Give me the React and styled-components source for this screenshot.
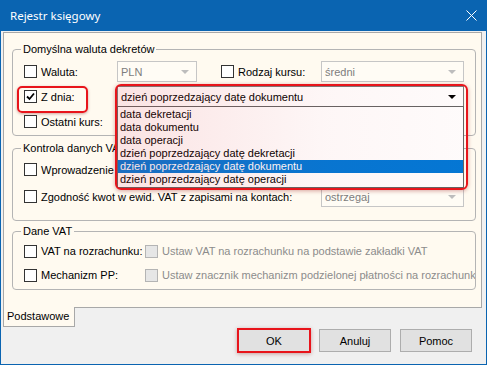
import React from 'react';
import styled, { createGlobalStyle, css } from 'styled-components';

const GlobalStyle = createGlobalStyle`
  html, body { margin: 0; padding: 0; }
  body {
    width: 487px;
    height: 365px;
    overflow: hidden;
    font-family: "Liberation Sans", Arial, sans-serif;
    font-size: 11px;
    color: #000;
    background: #fff;
  }
  * { box-sizing: border-box; }
`;

const Window = styled.div`
  width: 487px;
  height: 365px;
  display: flex;
  flex-direction: column;
`;

const TitleBar = styled.div`
  height: 31px;
  flex: none;
  background: #0a64b1;
  color: #fff;
  font-family: "Noto Sans", "Liberation Sans", sans-serif;
  font-size: 11.5px;
  display: flex;
  align-items: center;
  justify-content: space-between;
  padding: 0 10px 1px 10px;
`;

const Body = styled.div`
  flex: 1;
  display: flex;
  flex-direction: column;
  background: #f0f0f0;
  border: 1px solid #0a64b1;
  border-top: none;
  padding: 1px 4px 0 2px;
`;

const Panel = styled.div`
  height: 276px;
  background: #fffaf0;
  border: 1px solid #a8a8a8;
  padding: 9px 5px 0 8px;
  display: flex;
  flex-direction: column;
`;

const Group = styled.fieldset`
  margin: 0 0 ${(p) => p.$gap || 0}px 0;
  border: 1px solid #b4b4b4;
  border-radius: 4px;
  padding: ${(p) => p.$pad || '5px 0 3px 11px'};
  display: flex;
  flex-direction: column;
  gap: ${(p) => p.$rowGap || 5}px;
  min-width: 0;
  overflow: ${(p) => (p.$clip ? 'hidden' : 'visible')};
`;

const Legend = styled.legend`
  padding: 0 2px;
  margin-left: -3px;
  line-height: 14px;
`;

const Row = styled.div`
  display: flex;
  align-items: center;
  height: ${(p) => p.$h || 21}px;
`;

const CheckLabel = styled.label`
  display: flex;
  align-items: center;
  gap: 4px;
  width: ${(p) => (p.$w ? `${p.$w}px` : 'auto')};
  margin-left: ${(p) => p.$ml || 0}px;
  flex: none;
  white-space: nowrap;
  color: ${(p) => (p.$disabled ? '#8c8c8c' : '#000')};
  position: relative;
  ${(p) =>
    p.$marked &&
    css`
      &::after {
        content: '';
        position: absolute;
        left: -7px;
        top: -4px;
        width: 67px;
        height: 23px;
        border: 2px solid #e8141b;
        border-radius: 5px;
        box-shadow: 0 1px 3px rgba(120, 0, 0, 0.35);
      }
    `}
`;

const Box = styled.span`
  width: 13px;
  height: 13px;
  flex: none;
  border: 1px solid ${(p) => (p.$disabled ? '#b4b4b4' : '#333')};
  background: ${(p) => (p.$disabled ? '#e6e6e6' : '#fff')};
  display: flex;
  align-items: center;
  justify-content: center;
`;

const Select = styled.div`
  width: ${(p) => p.$w}px;
  height: 21px;
  flex: none;
  border: 1px solid ${(p) => (p.$disabled ? '#c6c6c6' : '#7a7a7a')};
  background: ${(p) => (p.$disabled ? '#fffcf5' : '#fff')};
  color: ${(p) => (p.$disabled ? '#7d7d7d' : '#000')};
  display: flex;
  align-items: center;
  justify-content: space-between;
  padding: 0 7px 0 3px;
  position: relative;
`;

const Arrow = styled.span`
  width: 0;
  height: 0;
  border-left: 4px solid transparent;
  border-right: 4px solid transparent;
  border-top: 4px solid ${(p) => (p.$dark ? '#000' : '#bdbdbd')};
`;

const DropList = styled.div`
  position: absolute;
  left: -1px;
  right: -1px;
  top: 19px;
  height: 82px;
  background: #fff;
  border: 1px solid #646464;
  padding-top: 1px;
  z-index: 2;
`;

const Item = styled.div`
  height: 13px;
  line-height: 13px;
  padding-left: 2px;
  background: ${(p) => (p.$selected ? '#0078d7' : 'transparent')};
  color: ${(p) => (p.$selected ? '#fff' : '#000')};
  white-space: nowrap;
`;

const Highlight = styled.div`
  position: absolute;
  left: -3px;
  top: -3px;
  width: 353px;
  height: 106px;
  border: 2px solid #e8141b;
  border-radius: 6px;
  box-shadow: 0 1px 4px rgba(140, 0, 0, 0.35);
  background: linear-gradient(
    to right,
    rgba(220, 40, 40, 0.13),
    rgba(220, 40, 40, 0.04) 60%,
    rgba(220, 40, 40, 0.02)
  );
  pointer-events: none;
  z-index: 3;
`;

const TabStrip = styled.div`
  display: flex;
  margin-top: -1px;
`;

const Tab = styled.div`
  width: 72px;
  height: 20px;
  background: #fffaf0;
  border: 1px solid #a8a8a8;
  border-top: none;
  padding: 3px 0 0 3px;
  font-size: 11px;
`;

const ButtonRow = styled.div`
  display: flex;
  justify-content: flex-end;
  gap: 9px;
  padding-right: 10px;
  margin-top: 2px;
`;

const Button = styled.div`
  width: 72px;
  height: 23px;
  background: #e1e1e1;
  border: 1px solid #adadad;
  display: flex;
  align-items: center;
  justify-content: center;
  position: relative;
  ${(p) =>
    p.$marked &&
    css`
      &::after {
        content: '';
        position: absolute;
        inset: -2px;
        border: 2px solid #e8141b;
        box-shadow: 0 1px 4px rgba(120, 0, 0, 0.35);
      }
    `}
`;

const Check = ({ checked, disabled }) => (
  <Box $disabled={disabled}>
    {checked && (
      <svg width="9" height="9" viewBox="0 0 9 9">
        <path d="M1 4.5 L3.5 7 L8 1.5" fill="none" stroke="#000" strokeWidth="1.8" />
      </svg>
    )}
  </Box>
);

const options = [
  'data dekretacji',
  'data dokumentu',
  'data operacji',
  'dzień poprzedzający datę dekretacji',
  'dzień poprzedzający datę dokumentu',
  'dzień poprzedzający datę operacji',
];

export default function App() {
  return (
    <Window>
      <GlobalStyle />
      <TitleBar>
        <span>Rejestr księgowy</span>
        <svg width="11" height="11" viewBox="0 0 11 11">
          <path d="M0.5 0.5 L10.5 10.5 M10.5 0.5 L0.5 10.5" stroke="#fff" strokeWidth="1" />
        </svg>
      </TitleBar>
      <Body>
        <Panel>
          <Group $gap={5} $rowGap={4}>
            <Legend>Domyślna waluta dekretów</Legend>
            <Row>
              <CheckLabel $w={93}>
                <Check />
                Waluta:
              </CheckLabel>
              <Select $w={80} $disabled>
                PLN
                <Arrow />
              </Select>
              <CheckLabel $w={100} $ml={24}>
                <Check />
                Rodzaj kursu:
              </CheckLabel>
              <Select $w={143} $disabled>
                średni
                <Arrow />
              </Select>
            </Row>
            <Row>
              <CheckLabel $w={93} $marked>
                <Check checked />
                Z dnia:
              </CheckLabel>
              <Select $w={347}>
                dzień poprzedzający datę dokumentu
                <Arrow $dark />
                <DropList>
                  {options.map((o, i) => (
                    <Item key={o} $selected={i === 4}>
                      {o}
                    </Item>
                  ))}
                </DropList>
                <Highlight />
              </Select>
            </Row>
            <Row>
              <CheckLabel $w={93}>
                <Check />
                Ostatni kurs:
              </CheckLabel>
            </Row>
          </Group>
          <Group $gap={3} $rowGap={6} $pad="4px 0 13px 11px">
            <Legend>Kontrola danych VAT</Legend>
            <Row>
              <CheckLabel>
                <Check />
                Wprowadzenie dokumentu
              </CheckLabel>
            </Row>
            <Row>
              <CheckLabel $w={297}>
                <Check />
                Zgodność kwot w ewid. VAT z zapisami na kontach:
              </CheckLabel>
              <Select $w={143} $disabled>
                ostrzegaj
                <Arrow />
              </Select>
            </Row>
          </Group>
          <Group $rowGap={6} $pad="4px 0 5px 11px" $clip>
            <Legend>Dane VAT</Legend>
            <Row $h={18}>
              <CheckLabel $w={121}>
                <Check />
                VAT na rozrachunku:
              </CheckLabel>
              <CheckLabel $disabled>
                <Check disabled />
                Ustaw VAT na rozrachunku na podstawie zakładki VAT
              </CheckLabel>
            </Row>
            <Row $h={18}>
              <CheckLabel $w={121}>
                <Check />
                Mechanizm PP:
              </CheckLabel>
              <CheckLabel $disabled>
                <Check disabled />
                Ustaw znacznik mechanizm podzielonej płatności na rozrachunki
              </CheckLabel>
            </Row>
          </Group>
        </Panel>
        <TabStrip>
          <Tab>Podstawowe</Tab>
        </TabStrip>
        <ButtonRow>
          <Button $marked>OK</Button>
          <Button>Anuluj</Button>
          <Button>Pomoc</Button>
        </ButtonRow>
      </Body>
    </Window>
  );
}
